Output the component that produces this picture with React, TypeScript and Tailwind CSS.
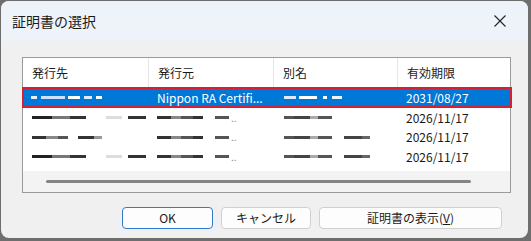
import React from 'react';

const cols = ['w-[126px]', 'w-[125px]', 'w-[124px]', 'flex-1'];

// blurred placeholder strokes standing in for redacted text
const Smudge = ({ parts }: { parts: [number, string][] }) => (
  <div className="flex items-center h-[4px]">
    {parts.map(([w, c], i) => (
      <div key={i} className="h-[3px]" style={{ width: w, background: c }} />
    ))}
  </div>
);

const rowA: [number, string][] = [[20, '#222'], [18, '#777'], [16, '#333'], [20, 'transparent'], [16, '#ddd'], [6, 'transparent'], [18, '#333']];
const rowB: [number, string][] = [[14, '#333'], [12, '#888'], [10, '#555'], [10, 'transparent'], [16, '#333'], [8, '#999']];
const rowC: [number, string][] = [[10, '#555'], [16, '#444'], [8, '#aaa'], [14, '#555']];
const selA: [number, string][] = [[6, '#e8f0ff'], [4, 'transparent'], [24, '#cfe0ff'], [3, 'transparent'], [12, '#ffffff'], [4, 'transparent'], [8, '#dfe9ff'], [4, 'transparent'], [6, '#ffffff']];
const selC: [number, string][] = [[12, '#dfe9ff'], [3, 'transparent'], [18, '#ffffff'], [6, 'transparent'], [4, '#ffffff'], [5, 'transparent'], [10, '#eef4ff']];

const App = () => {
  return (
    <div className="w-[531px] h-[241px] bg-[#6e6e6e] pl-[1px] pt-[1px] pr-[3px] pb-[3px]" style={{ fontFamily: '"Noto Sans CJK JP", "Noto Sans", sans-serif' }}>
      <div className="h-full rounded-[8px] bg-[#f0f0f0] flex flex-col overflow-hidden">
        {/* Title bar */}
        <div className="h-[40px] bg-[#eef3f9] flex items-center justify-between pl-[11px] pr-[22px] shrink-0">
          <span className="text-[14px] text-[#1a1a1a]">証明書の選択</span>
          <svg width="12" height="12" viewBox="0 0 12 12">
            <path d="M0.5 0.5 L11.5 11.5 M11.5 0.5 L0.5 11.5" stroke="#222" strokeWidth="1.1" />
          </svg>
        </div>

        <div className="pl-[21px] pt-[16px]">
          {/* List view */}
          <div className="w-[489px] h-[136px] border border-[#9a9a9a] bg-white flex flex-col">
            <div className="h-[29px] flex text-[12px] text-[#1a1a1a] shrink-0">
              {['発行先', '発行元', '別名', '有効期限'].map((t, i) => (
                <div key={t} className={`${cols[i]} flex items-center pl-[9px] ${i < 3 ? 'border-r border-[#e5e5e5]' : ''}`}>
                  {t}
                </div>
              ))}
            </div>

            {/* selected row */}
            <div className="h-[21px] border-2 border-[#d42030] bg-[#0078d7] flex text-[12px] text-white -ml-[1px] w-[490px] shrink-0">
              <div className="w-[125px] flex items-center pl-[7px]">
                <Smudge parts={selA} />
              </div>
              <div className="w-[125px] flex items-center pl-[8px] whitespace-nowrap">Nippon RA Certifi...</div>
              <div className="w-[124px] flex items-center pl-[10px]">
                <Smudge parts={selC} />
              </div>
              <div className="flex-1 flex items-center pl-[8px]">2031/08/27</div>
            </div>

            {[0, 1, 2].map((r) => (
              <div key={r} className="h-[19.5px] flex text-[12px] text-[#1a1a1a] items-center shrink-0">
                <div className="w-[126px] pl-[9px]"><Smudge parts={r === 1 ? rowB : rowA} /></div>
                <div className="w-[125px] pl-[8px] flex items-center gap-[2px]">
                  <Smudge parts={[[14, '#333'], [10, '#888'], [12, '#555'], [10, '#333'], [12, 'transparent'], [14, '#555']]} />
                  <span className="text-[10px] leading-none text-[#888]">..</span>
                </div>
                <div className="w-[124px] pl-[10px]"><Smudge parts={r === 0 ? rowC : [...rowC, [12, 'transparent'], [18, '#444'], [8, '#666']]} /></div>
                <div className="flex-1 pl-[8px]">2026/11/17</div>
              </div>
            ))}

            {/* horizontal scroll bar */}
            <div className="mt-auto h-[21px] bg-[#f3f3f3] flex items-center pl-[23px]">
              <div className="w-[425px] h-[3px] rounded-full bg-[#858585]" />
            </div>
          </div>

          {/* Buttons */}
          <div className="flex gap-[8px] mt-[14px] pl-[100px] text-[12px] text-[#1a1a1a]">
            <button className="w-[91px] h-[22px] rounded-[4px] border border-[#2e7cd1] bg-[#fdfdfd] flex items-center justify-center">OK</button>
            <button className="w-[90px] h-[22px] rounded-[4px] border border-[#d0d0d0] bg-[#fdfdfd] flex items-center justify-center">キャンセル</button>
            <button className="w-[183px] h-[22px] rounded-[4px] border border-[#d0d0d0] bg-[#fdfdfd] flex items-center justify-center">
              証明書の表示(<span className="underline">V</span>)
            </button>
          </div>
        </div>
      </div>
    </div>
  );
};

export default App;
